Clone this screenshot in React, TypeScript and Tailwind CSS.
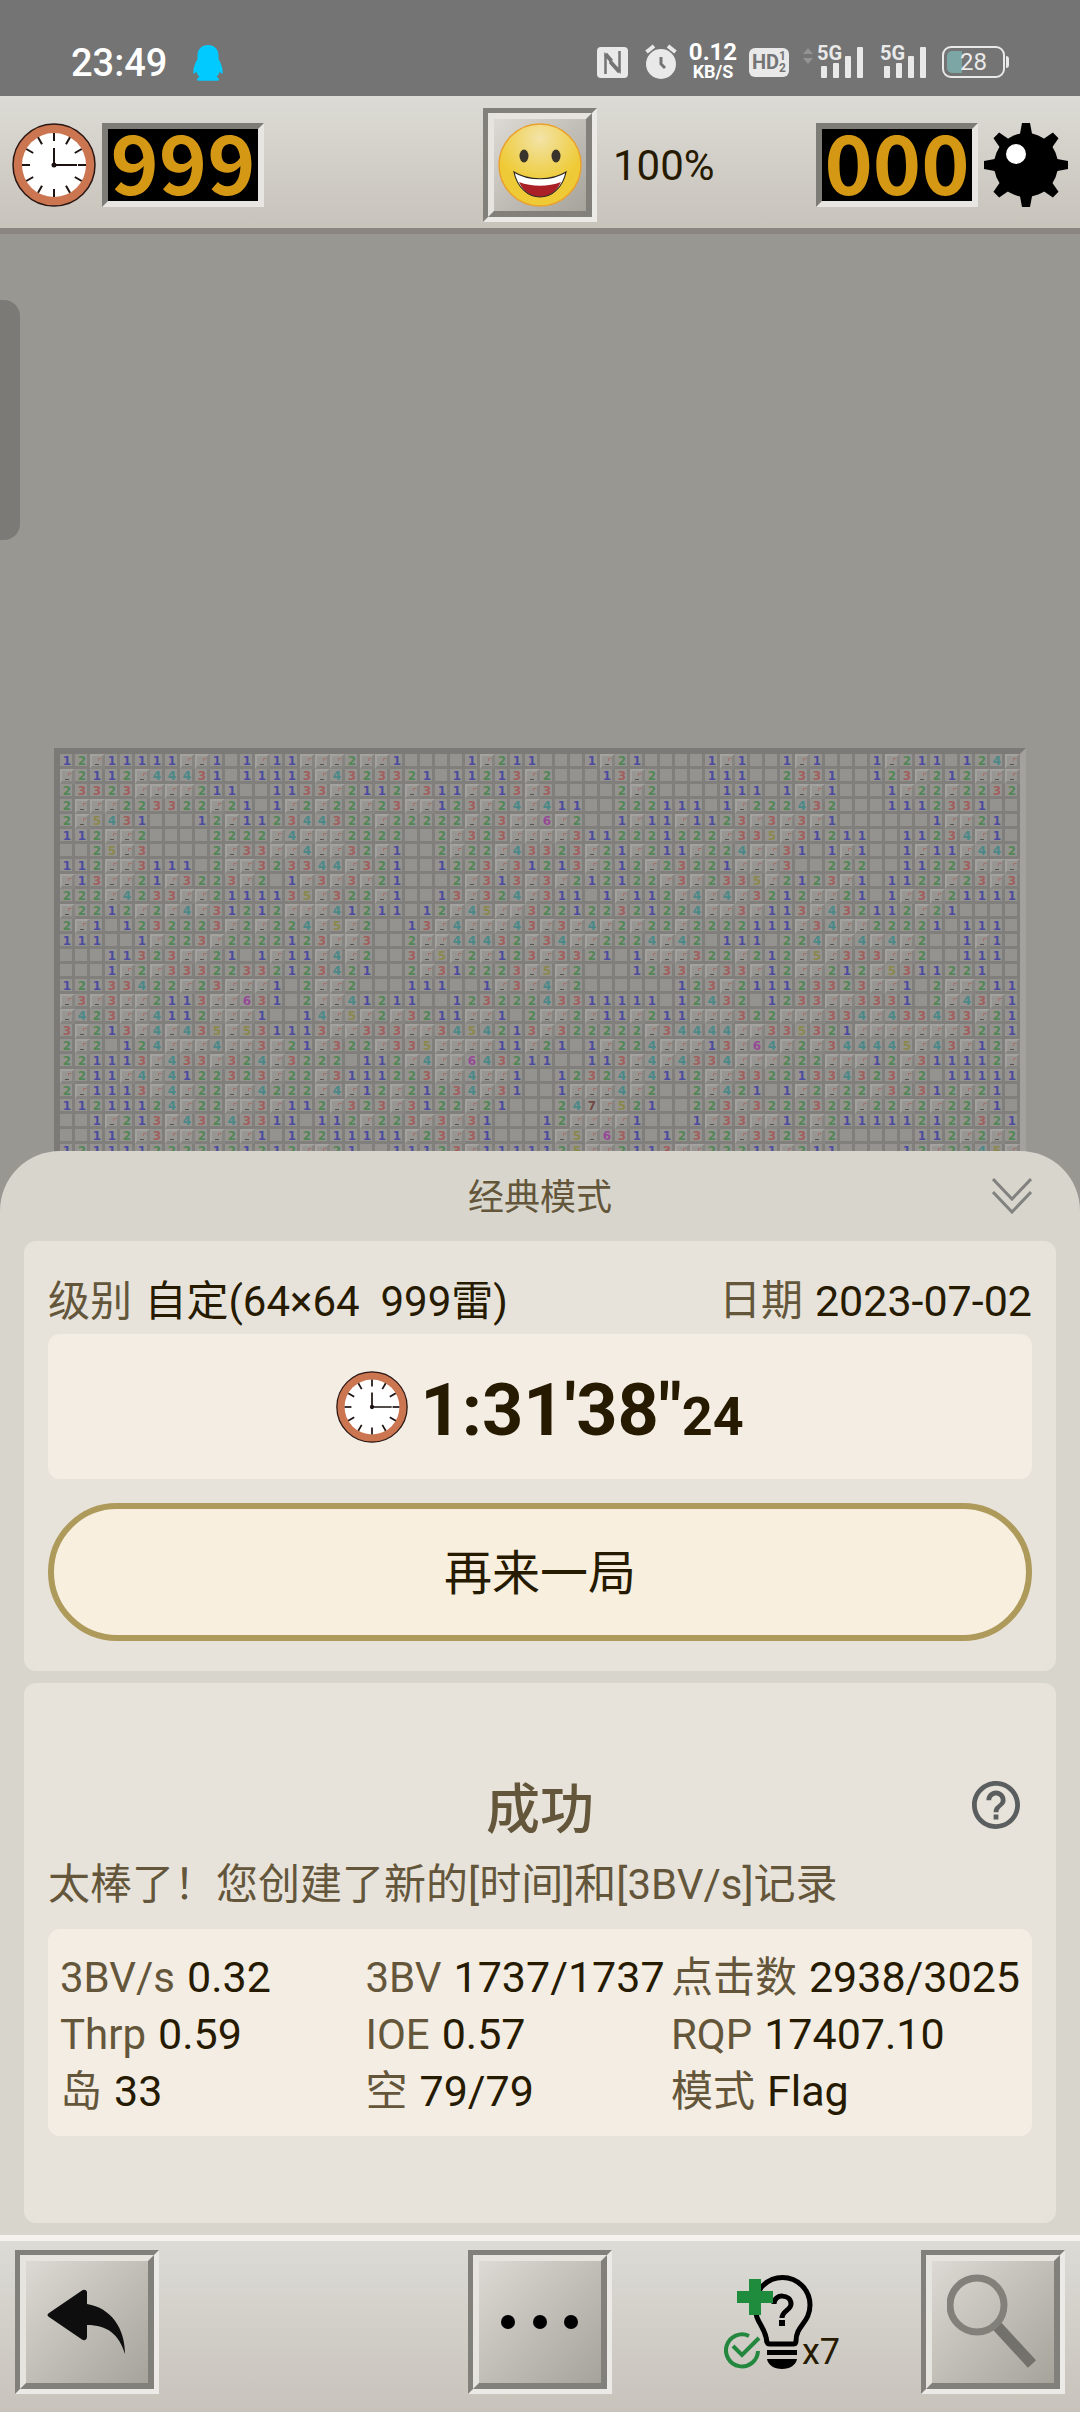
import type { ReactNode } from "react";

// "." is an opened empty cell, "F" a flagged one
const BOARD = [
  "12F11111FF1.1F11FFF2F" + "F1....1F211...1F21..." + ".1F1..1F1...1F211.124F",
  "F2112F44431.11113F432" + "3321.11213F2...13F2.." + ".111..2331..123F212FFF",
  "23323FFFF211..1133F21" + "12F311F213F3....2F2.." + "..111.1FF1...1F22F2232",
  "2FFF223322F21.1F2F22F" + "23FF123F24F411..22211" + "1.1F222432...1112331..",
  "2F5431...12F112344322" + "F22222F23FF6F2..1F11F" + "1123F3F3F1......1FF21.",
  "112FF2....2222F4FFF22" + "22..2F323FFFF31122212" + "22F335F31211..11234F1.",
  "..25F3....2F33FF4FF32" + "F1..2F22F43323F21F211" + "F224FF31.1F1..1F11F442",
  "112FF3111.2FF323344F3" + "21..1223F31213F212F23" + "221FFF3..222..11223FFF",
  "F13FF21F3223F2.1F3F3F" + "21...2F313F3F212122F3" + "F2335F2123F1.1122F23F3",
  "222F4233FF2111135F322" + "F1..13F324F311.1F112F" + "4F4F3212FF21.1F3F21111",
  "F2212F2F4F31212FFF412" + "11.12F45FF32212232122" + "4FF3F113F432112F21....",
  "2F1.1232223F2F224F5F2" + "..13F4FFF43F3F4F2F22F" + "2222111F34FF22221.111.",
  "111..1F223F2222123FF3" + "..2FF44432F34FF2224F4" + "2.111.224FF4F4F2..1F1.",
  "...11323FF21.1F11F4F2" + "..3F5F2F123F3321.1FFF" + "322F212F5F333FF2..111.",
  "...1F2F33322332123421" + "..2F312223F5F2...1233" + "FF33F12FF212F5311221..",
  "12133422F23FFF1.2FF2." + "..111..1F3F4F2......1" + "23F211123323FF1.2FF211",
  "F3F3FF2113FF631.2FF41" + "211..12322243311111.1" + "2432.1233FF3331.2F43F1",
  "F423FF4112FFF1..14F5F" + "2F3211FF1.2FF2F11F211" + "FFF322FFF334F433433F21",
  "3F213F4F435F531113FF3" + "33FF3454213F322222F34" + "444FF335321FFFFFFF3221",
  "2F2.124FFF4FF3F21F322" + "F335FFFF11F21.1F224FF" + "F13F64F2F344445F43F12F",
  "221113F433F324F3222.1" + "12F4FF643211..113F4F4" + "334FFF222FFF12F311112F",
  "F211F4F4122323F22F311" + "1223FF4FF1..12324F411" + "2FF33221334323F2.11111",
  "2F1113F4F22FF4222F4F1" + "2F21234F31..1FFF4F2.." + "2F421.1F2F22F32312F21.",
  "11211124F22FF3F112F32" + "3F3122F21...247F521.." + "223F3222322F22F2F22F1.",
  "..1F213F43243311.112F" + "223F3F31...12FFFF1..." + "1F33FF12F2111112122321",
  "..112F3FF2F2F1.122111" + "11F23F31...1F5F631.12" + "322F3323F2.....112F2F2",
  "1211112222121212FF21." + ".11123F1111125FF2113F" + "F22211F211....12F2245F",
];

const DIGIT_COLORS: Record<string, string> = {
  "1": "text-[#4d4b9e]",
  "2": "text-[#538656]",
  "3": "text-[#a15f5d]",
  "4": "text-[#4b8888]",
  "5": "text-[#8b884e]",
  "6": "text-[#964a96]",
  "7": "text-[#6f4843]",
};

const STATS = [
  ["3BV/s", "0.32"],
  ["3BV", "1737/1737"],
  ["点击数", "2938/3025"],
  ["Thrp", "0.59"],
  ["IOE", "0.57"],
  ["RQP", "17407.10"],
  ["岛", "33"],
  ["空", "79/79"],
  ["模式", "Flag"],
];

function Signal() {
  return (
    <div className="relative h-[34px] w-12">
      <span className="absolute -top-1 left-0 text-xl leading-6 font-bold">5G</span>
      <svg className="h-[34px] w-12" viewBox="0 0 48 34" fill="currentColor">
        <rect x="4" y="21" width="6" height="12" rx="1" />
        <rect x="16" y="18" width="6" height="15" rx="1" />
        <rect x="28" y="11" width="6" height="22" rx="1" />
        <rect x="40" y="2" width="6" height="31" rx="1" />
      </svg>
    </div>
  );
}

function StatusBar() {
  return (
    <div className="flex h-24 items-end justify-between bg-[#747474] pr-[71px] pb-[14px] pl-[71px] text-[#e9e9e9]">
      <div className="flex items-center gap-[26px]">
        <span className="text-[38px] leading-[38px] font-medium text-white">23:49</span>
        <svg className="h-9 w-[30px]" viewBox="0 0 30 36" fill="#00caff">
          <path d="M15 0C8.500 0 4.500 4.500 4.500 10.500V14C2 18 0 23 .3 28.500c.8.600 2-.3 3-2 .5 2 1.700 4 3.200 5.500-1.500.5-2.500 1.200-2.500 2.500 0 .8.500 1.200 1.500 1.200h19c1 0 1.500-.4 1.500-1.200 0-1.300-1-2-2.500-2.500 1.500-1.500 2.700-3.500 3.200-5.500 1 1.700 2.200 2.600 3 2C30 23 28 18 25.500 14v-3.500C25.500 4.500 21.500 0 15 0Z" />
        </svg>
      </div>
      <div className="flex items-center">
        <svg className="mr-[17px] h-[31px] w-[31px]" viewBox="0 0 31 31">
          <rect width="31" height="31" rx="4" fill="currentColor" />
          <path d="M8.500 27V8l6 6M22.500 4v20l-9-9v-3" fill="none" stroke="#747474" strokeWidth="2.500" />
          <path d="m8.500 7 6 7M13.500 15l9 10" fill="none" stroke="#747474" strokeWidth="4" />
        </svg>
        <svg className="mr-[14px] h-9 w-8" viewBox="0 0 32 36">
          <circle cx="16" cy="20" r="15" fill="currentColor" />
          <path d="M1.500 8 9 2M30.500 8 23 2" stroke="currentColor" strokeWidth="4" />
          <path d="M16 13v7l4 4" fill="none" stroke="#747474" strokeWidth="3" />
        </svg>
        <div className="mr-[14px] flex w-11 flex-col items-center font-bold text-white">
          <span className="text-2xl leading-5">0.12</span>
          <span className="text-lg leading-5">KB/S</span>
        </div>
        <div className="mr-[14px] flex h-[29px] w-10 items-center justify-center rounded-md bg-[#e9e9e9] text-[#747474]">
          <span className="text-xl font-bold">HD</span>
          <span className="flex flex-col text-xs leading-[12px] font-bold">
            <span>1</span>
            <span>2</span>
          </span>
        </div>
        <svg className="mr-1 mb-3 h-4 w-[10px]" viewBox="0 0 10 16" fill="#939393">
          <path d="m5 0 5 6H0ZM5 16l5-6H0Z" />
        </svg>
        <Signal />
        <span className="w-[15px]" />
        <Signal />
        <span className="w-[14px]" />
        <div className="relative flex h-8 w-[63px] items-center justify-center rounded-[9px] border-2 border-[#e9e9e9] text-2xl">
          <span className="absolute inset-y-[3px] left-[3px] w-[15px] rounded-l-[5px] bg-[#7ca5a5]" />
          <span className="relative">28</span>
        </div>
        <span className="ml-px h-3 w-[3px] rounded-r bg-[#e9e9e9]" />
      </div>
    </div>
  );
}

function ClockIcon({ className }: { className: string }) {
  return (
    <svg className={className} viewBox="0 0 84 84">
      <circle cx="42" cy="42" r="41" fill="#cb7650" stroke="#2a1714" strokeWidth="1.500" />
      <circle cx="42" cy="42" r="32" fill="#fff" />
      {Array.from({ length: 12 }, (_, i) => (
        <path key={i} d="M42 10v8" stroke="#1c1210" strokeWidth="2" transform={`rotate(${i * 30} 42 42)`} />
      ))}
      <path d="M42 25v17h23" fill="none" stroke="#1c1210" strokeWidth="2" />
      <circle cx="42" cy="42" r="2.500" fill="#1c1210" />
    </svg>
  );
}

function MineIcon() {
  return (
    <svg className="h-[84px] w-[84px]" viewBox="0 0 84 84">
      {Array.from({ length: 8 }, (_, i) => (
        <path key={i} d="M38 0h8l3 16H35Z" transform={`rotate(${i * 45} 42 42)`} />
      ))}
      <circle cx="42" cy="42" r="32" />
      <circle cx="32" cy="31" r="10" fill="#fff" />
    </svg>
  );
}

function SmileIcon() {
  return (
    <svg className="h-[84px] w-[84px]" viewBox="0 0 84 84">
      <defs>
        <radialGradient id="face" cx="50%" cy="17%" r="55%">
          <stop offset="0" stopColor="#f3e3a8" />
          <stop offset="1" stopColor="#eecb36" />
        </radialGradient>
      </defs>
      <circle cx="42" cy="42" r="41" fill="url(#face)" stroke="#eba02d" strokeWidth="1.500" />
      <ellipse cx="26" cy="33" rx="4.500" ry="6.500" fill="#38342b" />
      <ellipse cx="58" cy="33" rx="4.500" ry="6.500" fill="#38342b" />
      <path d="M16 49c14 9 38 9 52 0-3 15-14 25-26 25S19 64 16 49Z" fill="#fff" />
      <path d="M21 59c13 5 29 5 42 0-4 9-12 15-21 15s-17-6-21-15Z" fill="#ab1f26" />
      <path d="M16 49c14 9 38 9 52 0-3 15-14 25-26 25S19 64 16 49Z" fill="none" stroke="#2f2a22" strokeWidth="1.200" />
    </svg>
  );
}

function Led({ value }: { value: string }) {
  return (
    <div className="flex h-[84px] w-[162px] items-center justify-center border-6 border-t-[#7d7c76] border-r-[#e7e6e2] border-b-[#e7e6e2] border-l-[#7d7c76] bg-black pb-[10px] font-['Noto_Sans_CJK_SC','Roboto',sans-serif] text-[82px] leading-[72px] font-bold text-[#d49815]">
      {value}
    </div>
  );
}

function BevelButton({ label, className, children }: { label: string; className: string; children: ReactNode }) {
  return (
    <button
      aria-label={label}
      className={`${className} border-5 border-t-[#82807a] border-r-[#ebeae6] border-b-[#ebeae6] border-l-[#82807a]`}
    >
      <span className="flex h-full w-full items-center justify-center border-6 border-t-[#e5e4df] border-r-[#82807a] border-b-[#82807a] border-l-[#e5e4df] bg-linear-to-br from-[#dddad5] to-[#a6a39b]">
        {children}
      </span>
    </button>
  );
}

function TopBar() {
  return (
    <header className="grid h-[138px] grid-cols-[1fr_auto_1fr] items-center border-b-6 border-[#8a867f] bg-linear-to-b from-[#dcdbd5] to-[#c8c3bb] px-3 pt-[6px]">
      <div className="flex items-center gap-[6px]">
        <ClockIcon className="h-[84px] w-[84px]" />
        <Led value="999" />
      </div>
      <BevelButton label="重新开始" className="h-[114px] w-[114px]">
        <SmileIcon />
      </BevelButton>
      <div className="flex items-center gap-[6px] pl-4">
        <span className="mr-auto text-[42px] text-[#261a00]">100%</span>
        <Led value="000" />
        <MineIcon />
      </div>
    </header>
  );
}

function Cell({ value }: { value: string }) {
  if (value === "F") {
    return (
      <span className="h-[15px] border-t-2 border-r-3 border-b-3 border-l-2 border-t-[#a3a29e] border-r-[#868581] border-b-[#868581] border-l-[#a3a29e] bg-[#979692]">
        <svg className="h-[10px] w-[10px]" viewBox="0 0 10 10">
          <path d="M6.500 5V2.500h3" fill="none" stroke="#a5706a" />
          <path d="M3 8.500h4" stroke="#55544f" />
        </svg>
      </span>
    );
  }
  return (
    <span
      className={`flex h-[15px] items-center justify-center border-r-3 border-b-3 border-[#807f7b] bg-[#94938f] pt-[2px] pl-[2px] ${DIGIT_COLORS[value] ?? ""}`}
    >
      {value === "." ? "" : value}
    </span>
  );
}

function Board() {
  return (
    <main className="relative h-[977px] overflow-hidden bg-[#989792] px-[54px] pt-[514px]">
      <span className="absolute top-[66px] left-0 h-60 w-5 rounded-r-2xl bg-[#7b7a76]" />
      <div className="h-full border-6 border-b-0 border-t-[#7b7a76] border-r-[#a3a29e] border-l-[#7b7a76] bg-[#807f7b]">
        <div className="grid grid-cols-[repeat(64,minmax(0,1fr))] font-['DejaVu_Sans',sans-serif] text-xs leading-3 font-bold">
          {BOARD.map((row, y) => row.split("").map((value, x) => <Cell key={`${y}-${x}`} value={value} />))}
        </div>
      </div>
    </main>
  );
}

function ResultCard() {
  return (
    <section className="rounded-xl bg-[#e7e3db] px-6 pt-7 pb-[30px]">
      <div className="flex h-[65px] items-center justify-between text-[42px]">
        <p className="whitespace-pre">
          <span className="mr-[2px] text-[#64563a]">级别</span> 自定(64×64{"  "}999雷)
        </p>
        <p className="flex gap-3">
          <span className="text-[#64563a]">日期</span>
          <time className="text-[43px]" dateTime="2023-07-02">
            2023-07-02
          </time>
        </p>
      </div>
      <div className="flex h-[145px] items-center justify-center gap-3 rounded-xl bg-[#f4ede3]">
        <ClockIcon className="h-[72px] w-[72px]" />
        <p className="pt-2 text-[72px] font-bold">
          1:31'38"<span className="text-[54px]">24</span>
        </p>
      </div>
      <button className="mt-6 h-[138px] w-full rounded-full border-6 border-[#ae9a5b] bg-[#f8efdf] pt-1 text-5xl">
        再来一局
      </button>
    </section>
  );
}

function StatsCard() {
  return (
    <section className="flex-1 rounded-xl bg-[#e7e3db] px-6 pt-[86px]">
      <div className="grid h-[72px] grid-cols-[1fr_auto_1fr] items-center text-[#64563a]">
        <span />
        <h2 className="pt-3 text-[54px] leading-[60px] font-medium">成功</h2>
        <button aria-label="帮助" className="mr-3 justify-self-end">
          <svg className="h-12 w-12" viewBox="2 2 20 20" fill="#5a5e5e">
            <path d="M11 18h2v-2h-2v2zm1-16C6.480 2 2 6.480 2 12s4.480 10 10 10 10-4.480 10-10S17.520 2 12 2zm0 18c-4.410 0-8-3.590-8-8s3.590-8 8-8 8 3.590 8 8-3.590 8-8 8zm0-14c-2.210 0-4 1.790-4 4h2c0-1.100.9-2 2-2s2 .9 2 2c0 2-3 1.750-3 5h2c0-2.250 3-2.500 3-5 0-2.210-1.790-4-4-4z" />
          </svg>
        </button>
      </div>
      <p className="mt-3 text-[42px] leading-[64px] text-[#64563a]">太棒了！您创建了新的[时间]和[3BV/s]记录</p>
      <dl className="mt-3 grid grid-cols-[306fr_306fr_348fr] rounded-xl bg-[#f4ede3] px-3 pt-5 pb-4 text-[42px] leading-[57px]">
        {STATS.map(([name, value]) => (
          <div key={name} className="flex gap-3 whitespace-nowrap">
            <dt className="text-[#64563a]">{name}</dt>
            <dd className="text-[43px]">{value}</dd>
          </div>
        ))}
      </dl>
    </section>
  );
}

function BottomBar() {
  return (
    <footer className="grid h-[177px] grid-cols-[1fr_auto_1fr] border-t-6 border-[#f3f2ef] bg-linear-to-b from-[#dcdbd6] to-[#c8c3bb] px-[15px] pt-[9px]">
      <BevelButton label="返回" className="h-36 w-36">
        <svg className="h-[66px] w-20" viewBox="0 0 80 66" fill="#0e0e0e">
          <path d="M2 24 35 1.500c2-1.500 5-.5 5 2V15c24 4 38 24 38 50-6-20-18-29-38-29v12c0 3-3 4-5 2.500L2 28c-2-1-2-3 0-4Z" />
        </svg>
      </BevelButton>
      <BevelButton label="更多" className="h-36 w-36">
        <svg className="h-4 w-20" viewBox="0 0 80 16">
          <circle cx="8" cy="8" r="7" />
          <circle cx="40" cy="8" r="7" />
          <circle cx="71" cy="8" r="7" />
        </svg>
      </BevelButton>
      <div className="flex items-start justify-between pl-28">
        <button aria-label="提示" className="mt-6 flex items-end">
          <svg className="h-24 w-[90px]" viewBox="0 0 90 96">
            <path
              d="M43 69C42 52 31 50 31 31a27 27 0 0 1 55 0c0 18-14 20-14 36 0 2-1 3-3 3H46c-2 0-3-1-3-3Z"
              fill="none"
              stroke="#000"
              strokeWidth="5"
            />
            <path d="M43 76h30v5H43ZM43 85h30c-1 6-7 10-15 10s-14-4-15-10Z" />
            <path d="M50 30c0-11 17-10 17 0 0 6-9 7-9 14" fill="none" stroke="#000" strokeWidth="5" />
            <path d="M55 46h6v6h-6Z" />
            <path d="M25 5h12v12h12v12H37v12H25V29H13V17h12Z" fill="#1f8b3c" />
            <path d="M25 62a16 16 0 1 0 9 15" fill="none" stroke="#23873e" strokeWidth="4" />
            <path d="m9 72 9 9 17-17" fill="none" stroke="#23873e" strokeWidth="4" />
          </svg>
          <span className="-ml-3 text-4xl leading-9 text-[#261a00]">x7</span>
        </button>
        <BevelButton label="查找" className="h-36 w-36">
          <svg className="h-[96px] w-[92px]" viewBox="0 0 92 96" fill="none" stroke="#82807b">
            <path d="m50 52 35 38" stroke="#73716c" strokeWidth="11" />
            <circle cx="30" cy="31" r="27" strokeWidth="7" />
          </svg>
        </BevelButton>
      </div>
    </footer>
  );
}

export default function App() {
  return (
    <div className="flex min-h-screen flex-col bg-[#d8d5cd] font-['Roboto','Noto_Sans_CJK_SC',sans-serif] text-[#261a00]">
      <StatusBar />
      <TopBar />
      <Board />
      <div className="relative -mt-15 flex flex-1 flex-col rounded-t-[60px] bg-[#d8d5cd] px-6 pb-3">
        <div className="grid h-[90px] grid-cols-[1fr_auto_1fr] items-center">
          <span />
          <h1 className="pt-1 text-4xl text-[#64563a]">经典模式</h1>
          <button aria-label="收起" className="mr-6 justify-self-end">
            <svg className="h-9 w-10" viewBox="0 0 40 36" fill="none" stroke="#828381" strokeWidth="3">
              <path d="m1 1 19 20L39 1M1 14l19 20 19-20" />
            </svg>
          </button>
        </div>
        <div className="flex flex-1 flex-col gap-3">
          <ResultCard />
          <StatsCard />
        </div>
      </div>
      <BottomBar />
    </div>
  );
}
